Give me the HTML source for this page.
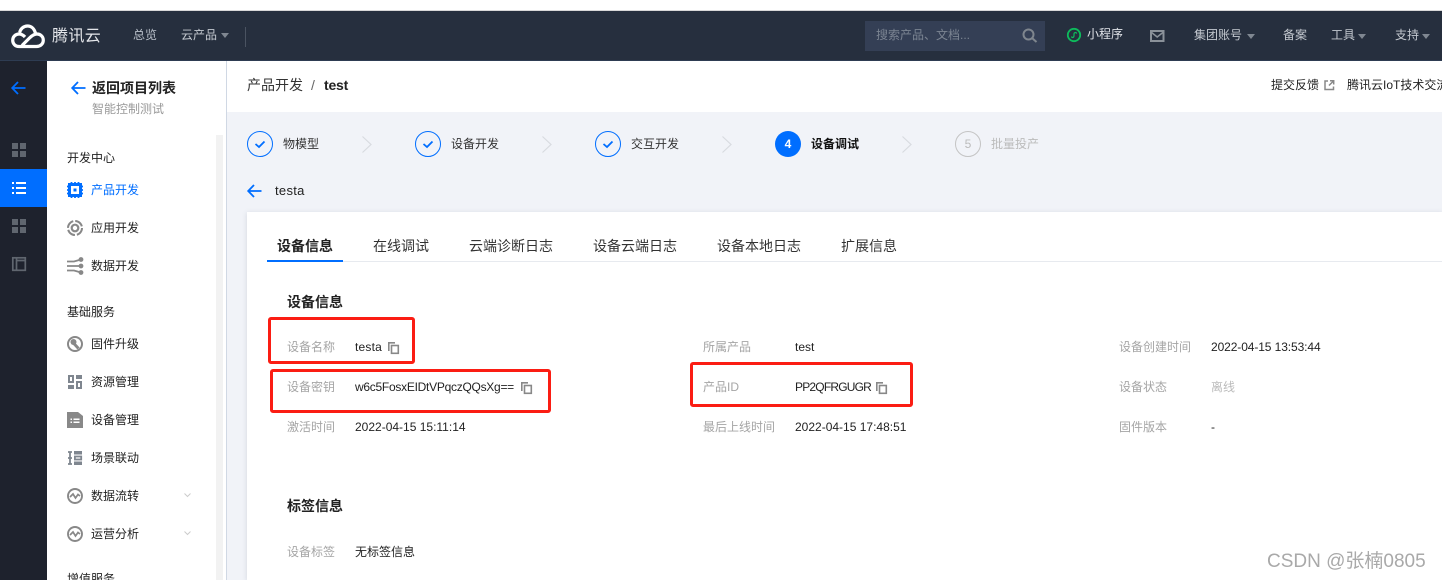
<!DOCTYPE html>
<html><head><meta charset="utf-8">
<style>
html,body{margin:0;padding:0;background:#fff}
#p{position:relative;width:1442px;height:580px;overflow:hidden;background:#fff;font-family:"Liberation Sans","Noto Sans CJK SC",sans-serif;font-size:12px;color:#000}
#p div,#p span.t{position:absolute;white-space:nowrap}
.t{line-height:20px;height:20px}
.n{color:#e0e3e8}
.g{color:#a5a5a5}
.k{color:#222}
.m{color:#333}
svg{position:absolute;overflow:visible}
</style></head><body><div id="p">
<div style="left:0;top:10px;width:1442px;height:1px;background:#d8d8d8"></div>
<div style="left:0;top:11px;width:1442px;height:50px;background:#262f3e"></div>
<div style="left:0;top:60px;width:1442px;height:1px;background:#2e3c52"></div>
<div style="left:0;top:61px;width:47px;height:519px;background:#1e222d"></div>
<div style="left:47px;top:61px;width:179px;height:519px;background:#fff"></div>
<div style="left:216px;top:135px;width:7px;height:445px;background:#f2f2f2"></div>
<div style="left:226px;top:61px;width:1px;height:519px;background:#d0d8e4"></div>
<div style="left:227px;top:112px;width:1215px;height:468px;background:#f1f3f8"></div>
<div style="left:247px;top:212px;width:1195px;height:368px;background:#fff;box-shadow:0 1px 5px rgba(80,90,110,.18)"></div>

<!-- logo -->
<svg style="left:11px;top:24px" width="34" height="25" viewBox="0 0 34 25" fill="none" stroke="#fff" stroke-width="3.200"><path d="M8 22.500H25.500C29.500 22.500 32.300 19.800 32.300 16.200C32.300 12.700 29.500 10 26 10C23 10 21 11.500 18.500 14L11 21.500M24.500 9.500C23.500 5 20.500 2 16.500 2C12.500 2 9.500 4.800 8.700 8.500M8 22.500C4.500 22.500 1.700 20 1.700 16.300C1.700 12.700 4.500 10 8 10C10.500 10 12.300 11.200 14 13"/></svg>
<div class="t" style="left:52px;top:26px;font-size:16px;line-height:22px;letter-spacing:.4px;color:#e4e6ea">腾讯云</div>
<div class="t n" style="left:133px;top:25px;color:#b9c0ca">总览</div>
<div class="t n" style="left:181px;top:25px;color:#c4c9d0">云产品</div>
<svg style="left:221px;top:33px" width="8" height="5"><path d="M0 0H8L4 5Z" fill="#7f8791"/></svg>
<div style="left:245px;top:27px;width:1px;height:20px;background:#4a5361"></div>

<!-- search -->
<div style="left:865px;top:21px;width:180px;height:30px;background:#343f55"></div>
<div class="t" style="left:876px;top:25px;color:#7b8492">搜索产品、文档...</div>
<svg style="left:1022px;top:28px" width="15" height="15" fill="none" stroke="#7f868e" stroke-width="2"><circle cx="6.500" cy="6.500" r="5"/><path d="M10.300 10.300L14.500 14"/></svg>
<svg style="left:1067px;top:28px" width="14" height="14" viewBox="0 0 14 14" fill="none"><circle cx="7" cy="7" r="6.200" stroke="#0dbb5c" stroke-width="1.800"/><path d="M4.500 8.500C4.800 10 6.800 9.800 7 8V5.800C7.200 4.200 9.300 4.100 9.600 5.600" stroke="#0dbb5c" stroke-width="1.200"/></svg>
<div class="t n" style="left:1087px;top:24px">小程序</div>
<svg style="left:1150px;top:30px" width="14" height="12" fill="none" stroke="#8a9199" stroke-width="2"><rect x="1" y="1" width="12.500" height="10"/><path d="M1 2L7.200 7L13.500 2" stroke-width="1.500"/></svg>
<div class="t n" style="left:1194px;top:25px;color:#c4c9d0">集团账号</div>
<svg style="left:1247px;top:34px" width="8" height="5"><path d="M0 0H8L4 5Z" fill="#7f8791"/></svg>
<div class="t n" style="left:1283px;top:25px;color:#c4c9d0">备案</div>
<div class="t n" style="left:1331px;top:25px;color:#c4c9d0">工具</div>
<svg style="left:1358px;top:34px" width="8" height="5"><path d="M0 0H8L4 5Z" fill="#7f8791"/></svg>
<div class="t n" style="left:1395px;top:25px;color:#c4c9d0">支持</div>
<svg style="left:1422px;top:34px" width="8" height="5"><path d="M0 0H8L4 5Z" fill="#7f8791"/></svg>

<!-- far-left rail -->
<svg style="left:11px;top:81px" width="15" height="14" fill="none" stroke="#006eff" stroke-width="1.800"><path d="M14.500 7H1.500M7 1L1.200 7L7 13"/></svg>
<svg style="left:12px;top:143px" width="14" height="14" fill="#60666f"><rect x="0" y="0" width="6" height="6"/><rect x="8" y="0" width="6" height="6"/><rect x="0" y="8" width="6" height="6"/><rect x="8" y="8" width="6" height="6"/></svg>
<div style="left:0;top:169px;width:47px;height:38px;background:#006eff"></div>
<svg style="left:12px;top:182px" width="14" height="12" fill="#fff"><rect x="0" y="0" width="2" height="2"/><rect x="4" y="0" width="10" height="2"/><rect x="0" y="5" width="2" height="2"/><rect x="4" y="5" width="10" height="2"/><rect x="0" y="10" width="2" height="2"/><rect x="4" y="10" width="10" height="2"/></svg>
<svg style="left:12px;top:219px" width="14" height="14" fill="#60666f"><rect x="0" y="0" width="6" height="6"/><rect x="8" y="0" width="6" height="6"/><rect x="0" y="8" width="6" height="6"/><rect x="8" y="8" width="6" height="6"/></svg>
<svg style="left:12px;top:257px" width="14" height="14" fill="none" stroke="#60666f" stroke-width="1.700"><rect x=".8" y=".8" width="12.500" height="12.500"/><path d="M4.500 1V13M4.500 3.500H13"/></svg>

<!-- nav panel -->
<svg style="left:71px;top:81px" width="15" height="14" fill="none" stroke="#006eff" stroke-width="1.800"><path d="M14.500 7H1.500M7 1L1.200 7L7 13"/></svg>
<div class="t" style="left:92px;top:78px;font-size:14px;font-weight:bold;color:#222">返回项目列表</div>
<div class="t" style="left:92px;top:99px;color:#999">智能控制测试</div>
<div class="t k" style="left:67px;top:148px">开发中心</div>

<svg style="left:67px;top:182px" width="16" height="16" fill="none"><rect x="2.500" y="2.500" width="11" height="11" stroke="#006eff" stroke-width="3"/><rect x="6.500" y="6.500" width="3" height="3" fill="#006eff"/><path d="M4.500 0V2M8 0V2M11.500 0V2M4.500 14V16M8 14V16M11.500 14V16M0 4.500H2M0 8H2M0 11.500H2M14 4.500H16M14 8H16M14 11.500H16" stroke="#006eff" stroke-width="1.800"/></svg>
<div class="t" style="left:91px;top:180px;color:#006eff">产品开发</div>

<svg style="left:67px;top:220px" width="16" height="16" fill="none" stroke="#888"><circle cx="8" cy="8" r="3.300" stroke-width="2.200"/><circle cx="8" cy="8" r="7" stroke-width="2" stroke-dasharray="9 2"/></svg>
<div class="t k" style="left:91px;top:218px">应用开发</div>

<svg style="left:67px;top:258px" width="16" height="16" fill="none" stroke="#888" stroke-width="1.800"><path d="M0 3.500H7L14 1.500M0 8H15M0 12.500H7L14 14.500"/><circle cx="14" cy="1.500" r="1.500" fill="#888"/><circle cx="14" cy="8" r="1.500" fill="#888"/><circle cx="14" cy="14.500" r="1.500" fill="#888"/></svg>
<div class="t k" style="left:91px;top:256px">数据开发</div>

<div class="t k" style="left:67px;top:302px">基础服务</div>

<svg style="left:67px;top:336px" width="16" height="16" fill="none"><circle cx="8" cy="8" r="7" stroke="#888" stroke-width="2"/><path d="M5 5.500L11.500 12.500" stroke="#888" stroke-width="3"/><circle cx="6.500" cy="6" r="3" fill="#888"/></svg>
<div class="t k" style="left:91px;top:334px">固件升级</div>

<svg style="left:68px;top:375px" width="14" height="14" fill="#7f868f"><path d="M0 0H6V8H0ZM2 2V6H4V2ZM8 0H14V4H8ZM0 10H6V14H0ZM8 6H14V14H8ZM10 8V12H12V8Z" fill-rule="evenodd"/></svg>
<div class="t k" style="left:91px;top:372px">资源管理</div>

<svg style="left:67px;top:412px" width="16" height="16" fill="#888"><path d="M0 0H11L16 4V16H0ZM3.500 6.500V8H5V6.500ZM6.500 6.500V8H12.500V6.500ZM3.500 9.500V11H5V9.500ZM6.500 9.500V11H12.500V9.500Z" fill-rule="evenodd"/></svg>
<div class="t k" style="left:91px;top:410px">设备管理</div>

<svg style="left:68px;top:451px" width="14" height="14" fill="none" stroke="#7f868f" stroke-width="1.800"><path d="M0 1H4M0 7H4M0 13H4M2 1V13"/><rect x="6" y="0" width="8" height="3.500" fill="#7f868f" stroke="none"/><rect x="6.900" y="5.500" width="6.300" height="3"/><rect x="6" y="10.500" width="8" height="3.500" fill="#7f868f" stroke="none"/></svg>
<div class="t k" style="left:91px;top:448px">场景联动</div>

<svg style="left:67px;top:488px" width="16" height="16" fill="none" stroke="#888"><circle cx="8" cy="8" r="7" stroke-width="1.900"/><path d="M3 9L6 6L8.500 10L11 6.500L13 8" stroke-width="1.700"/></svg>
<div class="t k" style="left:91px;top:486px">数据流转</div>
<svg style="left:184px;top:493px" width="7" height="5" fill="none" stroke="#ccc"><path d="M.5 .5L3.500 3.500L6.500 .5"/></svg>

<svg style="left:67px;top:526px" width="16" height="16" fill="none" stroke="#888"><circle cx="8" cy="8" r="7" stroke-width="1.900"/><path d="M3 9L6 6L8.500 10L11 6.500L13 8" stroke-width="1.700"/></svg>
<div class="t k" style="left:91px;top:524px">运营分析</div>
<svg style="left:184px;top:531px" width="7" height="5" fill="none" stroke="#ccc"><path d="M.5 .5L3.500 3.500L6.500 .5"/></svg>

<div class="t k" style="left:67px;top:569px">增值服务</div>

<!-- page header -->
<div class="t" style="left:247px;top:75px;font-size:14px;color:#333">产品开发</div>
<div class="t" style="left:311px;top:75px;font-size:14px;color:#666">/</div>
<div class="t" style="left:324px;top:75px;font-size:14px;font-weight:bold;letter-spacing:-.2px;color:#222">test</div>
<div class="t k" style="left:1271px;top:75px">提交反馈</div>
<svg style="left:1324px;top:80px" width="10" height="10" fill="none" stroke="#888" stroke-width="1.500"><path d="M4 1H1V9.500H9.500V6.500M5 5.500L9.500 1M6 .8H9.700V4.500"/></svg>
<div class="t k" style="left:1347px;top:75px">腾讯云IoT技术交流</div>

<!-- steps -->
<svg style="left:247px;top:131px" width="26" height="26" fill="none" stroke="#006eff"><circle cx="13" cy="13" r="12.500"/><path d="M8.500 13L12 16L17.500 10.500" stroke-width="1.800"/></svg>
<div class="t m" style="left:283px;top:134px">物模型</div>
<svg style="left:362px;top:136px" width="10" height="17" fill="none" stroke="#d8dbe0" stroke-width="1.200"><path d="M.5 .5L9 8.500L.5 16.500"/></svg>
<svg style="left:415px;top:131px" width="26" height="26" fill="none" stroke="#006eff"><circle cx="13" cy="13" r="12.500"/><path d="M8.500 13L12 16L17.500 10.500" stroke-width="1.800"/></svg>
<div class="t m" style="left:451px;top:134px">设备开发</div>
<svg style="left:542px;top:136px" width="10" height="17" fill="none" stroke="#d8dbe0" stroke-width="1.200"><path d="M.5 .5L9 8.500L.5 16.500"/></svg>
<svg style="left:595px;top:131px" width="26" height="26" fill="none" stroke="#006eff"><circle cx="13" cy="13" r="12.500"/><path d="M8.500 13L12 16L17.500 10.500" stroke-width="1.800"/></svg>
<div class="t m" style="left:631px;top:134px">交互开发</div>
<svg style="left:722px;top:136px" width="10" height="17" fill="none" stroke="#d8dbe0" stroke-width="1.200"><path d="M.5 .5L9 8.500L.5 16.500"/></svg>
<div style="left:775px;top:131px;width:26px;height:26px;border-radius:50%;background:#006eff;color:#fff;text-align:center;line-height:26px;font-weight:bold">4</div>
<div class="t" style="left:811px;top:134px;font-weight:bold;color:#111">设备调试</div>
<svg style="left:902px;top:136px" width="10" height="17" fill="none" stroke="#d8dbe0" stroke-width="1.200"><path d="M.5 .5L9 8.500L.5 16.500"/></svg>
<div style="left:955px;top:131px;width:24px;height:24px;border:1px solid #c4c4c4;border-radius:50%;color:#bbb;text-align:center;line-height:24px">5</div>
<div class="t" style="left:991px;top:134px;color:#bbb">批量投产</div>

<!-- back -->
<svg style="left:247px;top:184px" width="15" height="14" fill="none" stroke="#006eff" stroke-width="1.800"><path d="M14.500 7H1.500M7 1L1.200 7L7 13"/></svg>
<div class="t" style="left:275px;top:181px;font-size:13px;letter-spacing:.3px;color:#222">testa</div>

<!-- tabs -->
<div style="left:267px;top:261px;width:1175px;height:1px;background:#e7eaef"></div>
<div style="left:267px;top:260px;width:76px;height:2px;background:#006eff"></div>
<div class="t" style="left:277px;top:236px;font-size:14px;font-weight:bold;color:#222">设备信息</div>
<div class="t m" style="left:373px;top:236px;font-size:14px">在线调试</div>
<div class="t m" style="left:469px;top:236px;font-size:14px">云端诊断日志</div>
<div class="t m" style="left:593px;top:236px;font-size:14px">设备云端日志</div>
<div class="t m" style="left:717px;top:236px;font-size:14px">设备本地日志</div>
<div class="t m" style="left:841px;top:236px;font-size:14px">扩展信息</div>

<!-- info -->
<div class="t" style="left:287px;top:292px;font-size:14px;font-weight:bold;color:#222">设备信息</div>
<div class="t g" style="left:287px;top:337px">设备名称</div>
<div class="t k" style="left:355px;top:337px;letter-spacing:.2px">testa</div>
<svg style="left:388px;top:342px" width="11" height="12" fill="none" stroke="#888" stroke-width="1.600"><path d="M.8 9V.8H7"/><rect x="3.500" y="3.500" width="6.800" height="7.800"/></svg>
<div class="t g" style="left:287px;top:377px">设备密钥</div>
<div class="t k" style="left:355px;top:377px;letter-spacing:-.27px">w6c5FosxEIDtVPqczQQsXg==</div>
<svg style="left:521px;top:382px" width="11" height="12" fill="none" stroke="#888" stroke-width="1.600"><path d="M.8 9V.8H7"/><rect x="3.500" y="3.500" width="6.800" height="7.800"/></svg>
<div class="t g" style="left:287px;top:417px">激活时间</div>
<div class="t k" style="left:355px;top:417px">2022-04-15 15:11:14</div>

<div class="t g" style="left:703px;top:337px">所属产品</div>
<div class="t k" style="left:795px;top:337px">test</div>
<div class="t g" style="left:703px;top:377px">产品ID</div>
<div class="t k" style="left:795px;top:377px;letter-spacing:-.8px">PP2QFRGUGR</div>
<svg style="left:876px;top:382px" width="11" height="12" fill="none" stroke="#888" stroke-width="1.600"><path d="M.8 9V.8H7"/><rect x="3.500" y="3.500" width="6.800" height="7.800"/></svg>
<div class="t g" style="left:703px;top:417px">最后上线时间</div>
<div class="t k" style="left:795px;top:417px">2022-04-15 17:48:51</div>

<div class="t g" style="left:1119px;top:337px">设备创建时间</div>
<div class="t k" style="left:1211px;top:337px;letter-spacing:-.1px">2022-04-15 13:53:44</div>
<div class="t g" style="left:1119px;top:377px">设备状态</div>
<div class="t g" style="left:1211px;top:377px;color:#bbb">离线</div>
<div class="t g" style="left:1119px;top:417px">固件版本</div>
<div class="t k" style="left:1211px;top:417px">-</div>

<div class="t" style="left:287px;top:496px;font-size:14px;font-weight:bold;color:#222">标签信息</div>
<div class="t g" style="left:287px;top:542px">设备标签</div>
<div class="t k" style="left:355px;top:542px">无标签信息</div>

<!-- red annotations -->
<div style="left:268px;top:317px;width:141px;height:41px;border:3px solid #fb1d13;border-radius:3px"></div>
<div style="left:270px;top:369px;width:275px;height:38px;border:3px solid #fb1d13;border-radius:3px"></div>
<div style="left:690px;top:362px;width:217px;height:39px;border:3px solid #fb1d13;border-radius:3px"></div>

<!-- watermark -->
<div style="left:1267px;top:549px;font-size:19px;line-height:26px;color:#a9a9a9">CSDN @张楠0805</div>
</div></body></html>
